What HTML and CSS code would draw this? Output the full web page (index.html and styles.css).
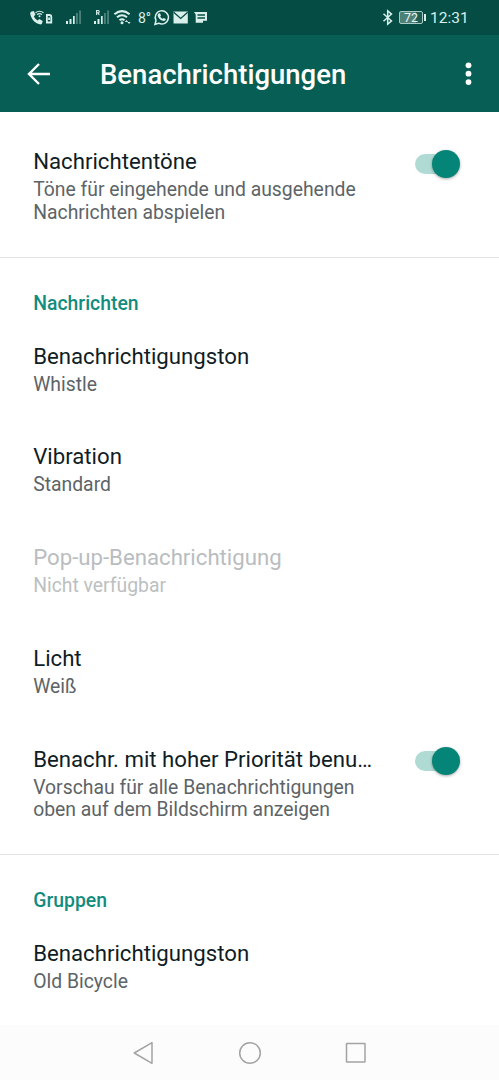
FILE: index.html
```html
<!DOCTYPE html>
<html lang="de">
<head>
<meta charset="utf-8">
<title>Benachrichtigungen</title>
<link rel="stylesheet" href="styles.css">
</head>
<body>
<div class="screen">
  <div class="status">
    <svg class="status-icons" width="135" height="35" viewBox="0 0 135 35">
      <!-- call over wifi -->
      <path class="fill" d="M31 11.700l2.800-.7 1.700 3.700-1.600 1.600c.7 1.800 2 3.200 3.700 4.100l1.700-1.400 3.400 2-.8 2.800c-.4.600-1.300.7-2.200.5-4.600-1-8.600-5.200-9.400-10.300-.1-.9.100-1.900.7-2.300z"/>
      <path class="line thin" d="M35.500 12.700q4-3 8 0M37 14.500q2.500-1.800 5 0"/>
      <circle class="fill" cx="39.500" cy="16.300" r="1"/>
      <path class="line bold" d="M46.900 15h2.300q2.100 0 2.100 2v5.500h-4.400zM49.100 17.500v2.500"/>
      <!-- signal 1 -->
      <path class="fill" d="M66 21h2v3h-2zM69.500 19h2v5h-2zM73 16h1.700v8H73z"/>
      <path class="fill dim" d="M76.200 13h1.500v11h-1.500zM79.300 10.500h1.500V24h-1.500z"/>
      <!-- signal 2, roaming -->
      <path class="fill" d="M94 21h2v3h-2zM97.500 19h2v5h-2zM101 16h1.700v8H101z"/>
      <path class="fill dim" d="M104.200 13h1.500v11h-1.500zM107.300 10.500h1.500V24h-1.500z"/>
      <path class="line thin" d="M96.600 15v-4.500h1.600q1 0 1 1.200t-1 1.200h-1.600M98 13l1.300 2"/>
      <!-- wifi -->
      <path class="line wifi" d="M114.400 14.300q7.600-6.300 15.200 0M117 17.300q5-4.200 10 0M119.500 20.200q2.500-2 5 0"/>
      <circle class="fill" cx="122" cy="22.700" r="1.500"/>
      <path class="fill" d="M126.500 20l1.700 2h-3.400zM129 24l-1.600-2h3.200z"/>
    </svg>
    <span class="temp">8°</span>
    <svg class="apps" width="58" height="35" viewBox="151 0 58 35">
      <path class="line" d="M155 24.300l1-3.800a6.600 6.600 0 1 1 2.700 2.700z"/>
      <path class="fill" d="M158.600 13.600l1.400-.4 1 2.200-.8 1c.6 1.100 1.400 1.900 2.500 2.400l1-.9 2.100 1-.2 1.200c-.7 1.200-2.200 1.200-3.700.5-2-.9-3.500-2.500-4.100-4.300-.4-1.200 0-2.200.8-2.700z"/>
      <path class="fill" d="M173.500 11.500h14.300v12h-14.300z"/>
      <path class="seal" d="M173.700 12.200l7 6.200 7-6.200"/>
      <path class="fill" fill-rule="evenodd" d="M194 12h13v10.800h-11.300v-8.300zM197.500 14.300v1.400h7.500v-1.400zM197.500 17.300v1.400h7.500v-1.400zM203 20.800v2h4v-2z"/>
    </svg>
    <svg class="bluetooth" width="12" height="35" viewBox="382 0 12 35">
      <path class="line" d="M383.500 13.700l8 7.200-3.800 3.300V10.800l3.800 3.300-8 7.200"/>
    </svg>
    <div class="battery"><span>72</span></div>
    <span class="clock">12:31</span>
  </div>

  <header class="bar">
    <svg class="back" width="24" height="24" viewBox="0 0 24 24"><path d="M23 12H2.500M12 2L2 12l10 10"/></svg>
    <h1>Benachrichtigungen</h1>
    <svg class="more" width="8" height="24" viewBox="0 0 8 24"><circle cx="4.500" cy="3.300" r="2.900"/><circle cx="4.500" cy="11.700" r="2.900"/><circle cx="4.500" cy="20.100" r="2.900"/></svg>
  </header>

  <main>
    <section class="first">
      <div class="row">
        <div class="copy"><div class="title">Nachrichtentöne</div><div class="sub">Töne für eingehende und ausgehende<br>Nachrichten abspielen</div></div>
        <div class="switch"><div class="knob"></div></div>
      </div>
    </section>
    <section>
      <h2>Nachrichten</h2>
      <div class="row"><div class="copy"><div class="title">Benachrichtigungston</div><div class="sub">Whistle</div></div></div>
      <div class="row"><div class="copy"><div class="title">Vibration</div><div class="sub">Standard</div></div></div>
      <div class="row disabled"><div class="copy"><div class="title">Pop-up-Benachrichtigung</div><div class="sub">Nicht verfügbar</div></div></div>
      <div class="row"><div class="copy"><div class="title">Licht</div><div class="sub">Weiß</div></div></div>
      <div class="row">
        <div class="copy"><div class="title">Benachr. mit hoher Priorität benu…</div><div class="sub">Vorschau für alle Benachrichtigungen<br>oben auf dem Bildschirm anzeigen</div></div>
        <div class="switch"><div class="knob"></div></div>
      </div>
    </section>
    <section>
      <h2>Gruppen</h2>
      <div class="row"><div class="copy"><div class="title">Benachrichtigungston</div><div class="sub">Old Bicycle</div></div></div>
    </section>
  </main>

  <nav class="nav">
    <svg width="24" height="24" viewBox="0 0 24 24"><path d="M20 1.700v20.600L2.300 12z"/></svg>
    <svg width="24" height="24" viewBox="0 0 24 24"><circle cx="12" cy="12" r="10.300"/></svg>
    <svg width="24" height="24" viewBox="0 0 24 24"><rect x="2.500" y="2.500" width="18.500" height="18.500" rx=".5"/></svg>
  </nav>
</div>
</body>
</html>
```
FILE: styles.css
```css
* { box-sizing: border-box; }
body { margin: 0; background: #fff; font-family: Roboto, sans-serif; }
.screen { width: 499px; height: 1080px; display: flex; flex-direction: column; overflow: hidden; }

.status { height: 35px; flex: none; display: flex; align-items: center; background: #054d44; color: #d9efeb; }
.status svg { display: block; flex: none; }
.fill { fill: #d9efeb; }
.dim { opacity: .4; }
.line { fill: none; stroke: #d9efeb; stroke-width: 1.5; }
.thin { stroke-width: 1.1; }
.bold { stroke-width: 1.8; }
.wifi { stroke-width: 2; }
.seal { fill: none; stroke: #054d44; stroke-width: 1.3; }
.temp { width: 16px; padding-left: 3px; font-size: 14px; white-space: nowrap; }
.bluetooth { margin-left: auto; }
.battery { position: relative; width: 24px; height: 13px; margin-left: 5px; border: 1px solid #a9cbc6; border-radius: 2px; background: linear-gradient(90deg, #4f8078 72%, #1d5c53 72%); color: #e7f7f4; font-size: 12.5px; line-height: 12px; text-align: center; }
.battery::after { content: ""; position: absolute; right: -4px; top: 2px; width: 2px; height: 7px; background: #d9efeb; }
.clock { margin: 0 31px 0 7px; width: 38px; font-size: 15.5px; white-space: nowrap; }

.bar { height: 77px; flex: none; display: flex; align-items: center; padding: 0 27px; background: #075e54; color: #fff; }
.back { fill: none; stroke: #fff; stroke-width: 2.4; }
.bar h1 { margin: 2px 0 0 49px; font-size: 27.5px; line-height: 34px; font-weight: 500; }
.more { margin-left: auto; fill: #fff; }

main { flex: 1; min-height: 0; overflow: hidden; }
section { padding-bottom: 9.3px; }
section.first { padding-top: 12.4px; }
section + section { border-top: 1px solid #e3e3e3; padding-top: 35px; }
h2 { margin: 0 0 2.65px; padding-left: 33.2px; font-size: 19.4px; line-height: 22.75px; font-weight: 500; color: #128c7e; }
.row { display: flex; justify-content: space-between; padding: 24px 38px 23px 33.2px; }
.title { font-size: 22.2px; line-height: 26px; color: #101d25; white-space: nowrap; }
.sub { margin-top: 5px; font-size: 19.35px; line-height: 22.75px; color: #5d6468; white-space: nowrap; }
.disabled .title { color: #b9bdc0; }
.disabled .sub { color: #bcbfc1; }
.switch { width: 42px; height: 20px; margin: 5.5px 4px 0 0; border-radius: 10px; background: #b0dbd5; display: flex; align-items: center; justify-content: flex-end; flex: none; }
.knob { width: 28px; height: 28px; margin-right: -3px; border-radius: 50%; background: #058577; box-shadow: 0 1px 3px rgba(0, 0, 0, .35); flex: none; }

.nav { height: 55px; flex: none; display: flex; justify-content: center; align-items: center; gap: 82px; background: #fcfcfc; }
.nav svg { fill: none; stroke: #a3a3a3; stroke-width: 1.5; stroke-linejoin: round; }
```
